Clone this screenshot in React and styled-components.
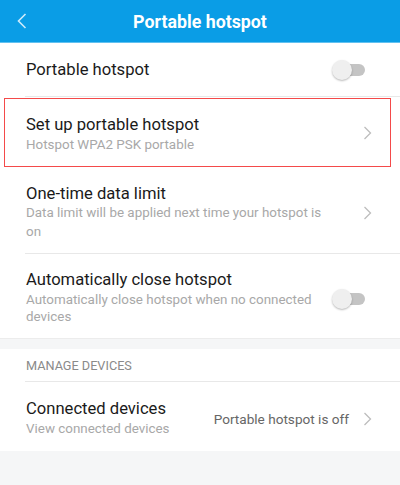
import styled, { createGlobalStyle } from 'styled-components'

const Global = createGlobalStyle`
  html, body { margin: 0; padding: 0; background: #f5f6f7; }
  body { font-family: Roboto, "Noto Sans", "Liberation Sans", sans-serif; }
`

/* ── Header ──────────────────────────────────────────── */
const Header = styled.header`
  height: 42px;
  background: #0a9de6;
  border-bottom: 1px solid #62c1f0;
  display: flex;
  align-items: center;
  justify-content: center;
  position: relative;
  color: #fff;
`

const Back = styled.button`
  position: absolute;
  left: 12px;
  top: 10px;
  width: 20px;
  height: 22px;
  padding: 0;
  border: 0;
  background: none;
  display: flex;
  align-items: center;
  justify-content: center;
`

const HeaderTitle = styled.h1`
  margin: 0;
  font-size: 17.8px;
  font-weight: 700;
`

/* ── Sections & rows ─────────────────────────────────── */
const Section = styled.section`
  background: #fff;
`

const Gap = styled.div`
  height: 10px;
  background: #f5f6f7;
  border-top: 1px solid #ececec;
`

const Row = styled.div`
  position: relative;
  display: flex;
  align-items: center;
  padding: ${p => p.$pad || '0'} 0 ${p => p.$padB || p.$pad || '0'} 26px;
  min-height: ${p => p.$h || 0}px;
  box-sizing: border-box;

  &::after {
    content: '';
    display: ${p => (p.$divider ? 'block' : 'none')};
    position: absolute;
    left: 25px;
    right: 0;
    bottom: 0;
    height: 1px;
    background: #e8e8e8;
  }
`

const Highlight = styled.div`
  position: absolute;
  left: 4px;
  right: 9px;
  top: 1px;
  bottom: 5px;
  border: 1.5px solid #f44a4a;
  pointer-events: none;
`

const Texts = styled.div`
  flex: 1;
  min-width: 0;
  white-space: ${p => (p.$nowrap ? 'nowrap' : 'normal')};
`

const Title = styled.div`
  font-size: 16.6px;
  line-height: 20px;
  color: #1a1a1a;
`

const Sub = styled.div`
  font-size: 13.4px;
  line-height: ${p => p.$lh || 18}px;
  color: #a8a8a8;
  margin-top: ${p => p.$mt || 0}px;
`

const Value = styled.span`
  font-size: 13.6px;
  color: #666;
  white-space: nowrap;
`

const Trail = styled.div`
  display: flex;
  align-items: center;
  align-self: center;
  margin: ${p => p.$mt || 0}px 28px 0 ${p => p.$ml || 20}px;
`

const SectionLabel = styled.div`
  position: relative;
  height: 33px;
  padding-left: 26px;
  display: flex;
  align-items: center;
  font-size: 12.7px;
  color: #8a8a8a;

  &::after {
    content: '';
    position: absolute;
    left: 25px;
    right: 0;
    bottom: 0;
    height: 1px;
    background: #e8e8e8;
  }
`

/* ── Switch ──────────────────────────────────────────── */
const Switch = styled.div`
  position: relative;
  width: 33px;
  height: 20px;
  margin: ${p => p.$mt || 0}px 35px 0 14px;
  flex-shrink: 0;
  align-self: center;

  &::before {
    content: '';
    position: absolute;
    left: 9px;
    right: 0;
    top: 4px;
    height: 12px;
    border-radius: 6px;
    background: #c4c4c4;
  }

  &::after {
    content: '';
    position: absolute;
    left: 0;
    top: 0;
    width: 20px;
    height: 20px;
    border-radius: 50%;
    background: #efefef;
    box-shadow: 0 1px 2px rgba(0, 0, 0, 0.28);
  }
`

const Chevron = () => (
  <svg width="9" height="14" viewBox="0 0 9 14">
    <polyline points="1.5,1 7.5,7 1.5,13" fill="none" stroke="#bdbdbd" strokeWidth="1.3" />
  </svg>
)

const BackIcon = () => (
  <svg width="10" height="16" viewBox="0 0 10 16">
    <polyline points="8.5,1 1.5,8 8.5,15" fill="none" stroke="#cdebfb" strokeWidth="1.6" />
  </svg>
)

const ChevronSlot = ({ mt, ml }) => (
  <Trail $mt={mt} $ml={ml}>
    <Chevron />
  </Trail>
)

export default function App() {
  return (
    <>
      <Global />
      <Header>
        <Back aria-label="Back"><BackIcon /></Back>
        <HeaderTitle>Portable hotspot</HeaderTitle>
      </Header>

      <Section>
        <Row $h={54} $divider>
          <Texts><Title>Portable hotspot</Title></Texts>
          <Switch />
        </Row>

        <Row $pad="18px">
          <Texts>
            <Title>Set up portable hotspot</Title>
            <Sub $mt={1}>Hotspot WPA2 PSK portable</Sub>
          </Texts>
          <ChevronSlot mt={-3} />
          <Highlight />
        </Row>

        <Row $pad="12px" $padB="13px" $divider>
          <Texts>
            <Title>One-time data limit</Title>
            <Sub $lh={19} $mt={-1}>Data limit will be applied next time your hotspot is on</Sub>
          </Texts>
          <ChevronSlot ml={30} />
        </Row>

        <Row $pad="16px" $padB="13px">
          <Texts>
            <Title>Automatically close hotspot</Title>
            <Sub $lh={17} $mt={1}>Automatically close hotspot when no connected devices</Sub>
          </Texts>
          <Switch $mt={2} />
        </Row>
      </Section>

      <Gap />

      <Section>
        <SectionLabel>MANAGE DEVICES</SectionLabel>
        <Row $pad="17px" $padB="13px">
          <Texts $nowrap>
            <Title>Connected devices</Title>
            <Sub $mt={1}>View connected devices</Sub>
          </Texts>
          <Value>Portable hotspot is off</Value>
          <ChevronSlot ml={14} />
        </Row>
      </Section>
    </>
  )
}
